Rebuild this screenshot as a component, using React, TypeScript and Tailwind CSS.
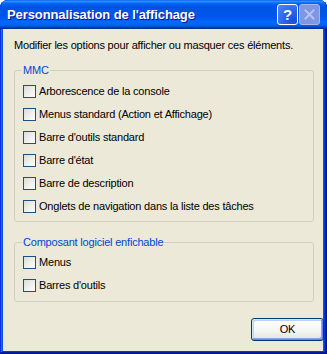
import React from "react";

const mmcItems = [
  "Arborescence de la console",
  "Menus standard (Action et Affichage)",
  "Barre d'outils standard",
  "Barre d'état",
  "Barre de description",
  "Onglets de navigation dans la liste des tâches",
];

const snapinItems = ["Menus", "Barres d'outils"];

function CheckRow({ label }: { label: string }) {
  return (
    <label className="flex h-[23px] items-center">
      <span className="h-[13px] w-[13px] shrink-0 border border-[#1C5180] bg-[linear-gradient(135deg,#DCDCD7_0%,#FFFFFF_100%)]" />
      <span className="ml-[3px] whitespace-nowrap">{label}</span>
    </label>
  );
}

function Group({ title, items, className }: { title: string; items: string[]; className?: string }) {
  return (
    <fieldset className={"w-[300px] rounded-[3px] border border-[#D0D0BF] px-[8px] " + (className ?? "")}>
      <legend className="ml-[-1px] px-[1px] h-[13px] leading-[13px] text-[#0046D5]">{title}</legend>
      <div className="flex flex-col">
        {items.map((it) => (
          <CheckRow key={it} label={it} />
        ))}
      </div>
    </fieldset>
  );
}

export default function App() {
  return (
    <div className="h-[354px] w-[327px] bg-white">
      <div
        className="flex h-[354px] w-[327px] flex-col rounded-t-[8px] bg-[#0855DD] shadow-[inset_-1px_-1px_#00138C,inset_1px_1px_#0831D9,inset_-2px_-2px_#001EA0,inset_2px_2px_#166AEE,inset_-3px_-3px_#003BDA]"
        style={{ fontFamily: '"Liberation Sans", Arial, sans-serif' }}
      >
        {/* title bar */}
        <div className="flex h-[29px] shrink-0 items-center rounded-t-[8px] bg-[linear-gradient(180deg,#0058EE_0%,#3593FF_4%,#288EFF_6%,#127DFF_8%,#036FFC_10%,#0262EE_14%,#0057E5_20%,#0054E3_24%,#0055EB_56%,#005BF5_66%,#026AFE_76%,#0062EF_86%,#0052D6_92%,#0040AB_94%,#003092_100%)] pl-[7px] pr-[7px]">
          <span className="text-[13px] font-bold tracking-[-0.1px] text-white [text-shadow:1px_1px_#0F1089]">
            Personnalisation de l'affichage
          </span>
          <div className="ml-auto flex gap-[1px]">
            <div className="flex h-[21px] w-[21px] items-center justify-center rounded-[3px] border border-white bg-[radial-gradient(circle_at_85%_85%,#1A4FD9_0%,#2A63EA_45%,#4D8CFA_100%)] text-[15px] font-bold leading-none text-white">
              ?
            </div>
            <div className="flex h-[21px] w-[21px] items-center justify-center rounded-[3px] border border-[#A6B8EC] bg-[#7D97E4]">
              <svg width="11" height="11" viewBox="0 0 11 11">
                <path d="M1.5 1.5 L9.5 9.5 M9.5 1.5 L1.5 9.5" stroke="#B4C3F0" strokeWidth="2" strokeLinecap="square" />
              </svg>
            </div>
          </div>
        </div>
        {/* client */}
        <div className="mb-[3px] ml-[3px] mr-[4px] flex flex-1 flex-col bg-[#ECE9D8] pl-[11px] pt-[10px] text-[11px] leading-[13px] tracking-[-0.2px] text-black">
          <div className="whitespace-nowrap">Modifier les options pour afficher ou masquer ces éléments.</div>
          <Group title="MMC" items={mmcItems} className="mt-[12px] pb-[3px] [&>div]:pt-[3px]" />
          <Group title="Composant logiciel enfichable" items={snapinItems} className="mt-[14px] pb-[4px] [&>div]:pt-[2px]" />
          <div className="mt-[16px] flex w-[310px] justify-end">
            <button className="h-[23px] w-[73px] rounded-[3px] border border-[#003C74] bg-[linear-gradient(180deg,#FFFFFF_0%,#F4F4F0_60%,#E3E2DA_100%)] shadow-[inset_-1px_-1px_#6982EE,inset_1px_1px_#CEE7FF,inset_-2px_-2px_#8CA2F2,inset_2px_2px_#B8D2FA]">
              OK
            </button>
          </div>
        </div>
      </div>
    </div>
  );
}
